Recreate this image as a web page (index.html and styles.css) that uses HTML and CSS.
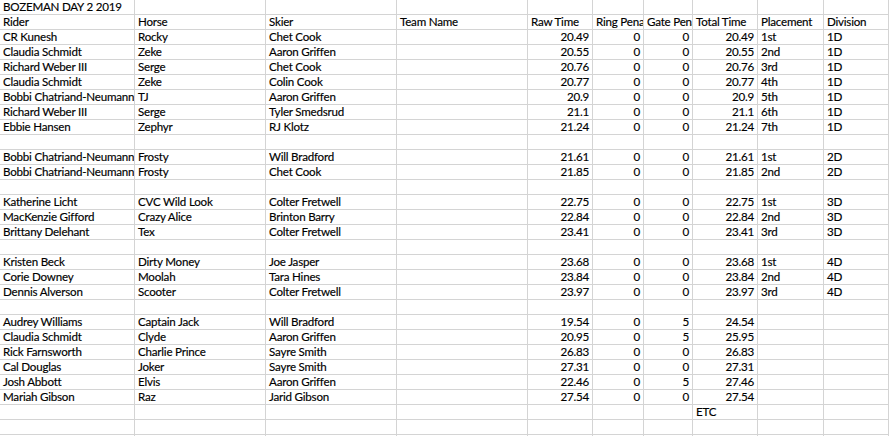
FILE: index.html
```html
<!DOCTYPE html>
<html>
<head>
<meta charset="utf-8">
<link rel="stylesheet" href="styles.css">
</head>
<body>
<div class="sheet">
  <div class="row"><span class="c">BOZEMAN DAY 2 2019</span><span class="c"></span><span class="c"></span><span class="c"></span><span class="c"></span><span class="c"></span><span class="c"></span><span class="c"></span><span class="c"></span><span class="c"></span></div>
  <div class="row"><span class="c">Rider</span><span class="c">Horse</span><span class="c">Skier</span><span class="c">Team Name</span><span class="c">Raw Time</span><span class="c">Ring Penalties</span><span class="c">Gate Penalties</span><span class="c">Total Time</span><span class="c">Placement</span><span class="c">Division</span></div>

  <div class="row"><span class="c">CR Kunesh</span><span class="c">Rocky</span><span class="c">Chet Cook</span><span class="c"></span><span class="c n">20.49</span><span class="c n">0</span><span class="c n">0</span><span class="c n">20.49</span><span class="c">1st</span><span class="c">1D</span></div>
  <div class="row"><span class="c">Claudia Schmidt</span><span class="c">Zeke</span><span class="c">Aaron Griffen</span><span class="c"></span><span class="c n">20.55</span><span class="c n">0</span><span class="c n">0</span><span class="c n">20.55</span><span class="c">2nd</span><span class="c">1D</span></div>
  <div class="row"><span class="c">Richard Weber III</span><span class="c">Serge</span><span class="c">Chet Cook</span><span class="c"></span><span class="c n">20.76</span><span class="c n">0</span><span class="c n">0</span><span class="c n">20.76</span><span class="c">3rd</span><span class="c">1D</span></div>
  <div class="row"><span class="c">Claudia Schmidt</span><span class="c">Zeke</span><span class="c">Colin Cook</span><span class="c"></span><span class="c n">20.77</span><span class="c n">0</span><span class="c n">0</span><span class="c n">20.77</span><span class="c">4th</span><span class="c">1D</span></div>
  <div class="row"><span class="c">Bobbi Chatriand-Neumann</span><span class="c">TJ</span><span class="c">Aaron Griffen</span><span class="c"></span><span class="c n">20.9</span><span class="c n">0</span><span class="c n">0</span><span class="c n">20.9</span><span class="c">5th</span><span class="c">1D</span></div>
  <div class="row"><span class="c">Richard Weber III</span><span class="c">Serge</span><span class="c">Tyler Smedsrud</span><span class="c"></span><span class="c n">21.1</span><span class="c n">0</span><span class="c n">0</span><span class="c n">21.1</span><span class="c">6th</span><span class="c">1D</span></div>
  <div class="row"><span class="c">Ebbie Hansen</span><span class="c">Zephyr</span><span class="c">RJ Klotz</span><span class="c"></span><span class="c n">21.24</span><span class="c n">0</span><span class="c n">0</span><span class="c n">21.24</span><span class="c">7th</span><span class="c">1D</span></div>

  <div class="row"><span class="c"></span><span class="c"></span><span class="c"></span><span class="c"></span><span class="c"></span><span class="c"></span><span class="c"></span><span class="c"></span><span class="c"></span><span class="c"></span></div>

  <div class="row"><span class="c">Bobbi Chatriand-Neumann</span><span class="c">Frosty</span><span class="c">Will Bradford</span><span class="c"></span><span class="c n">21.61</span><span class="c n">0</span><span class="c n">0</span><span class="c n">21.61</span><span class="c">1st</span><span class="c">2D</span></div>
  <div class="row"><span class="c">Bobbi Chatriand-Neumann</span><span class="c">Frosty</span><span class="c">Chet Cook</span><span class="c"></span><span class="c n">21.85</span><span class="c n">0</span><span class="c n">0</span><span class="c n">21.85</span><span class="c">2nd</span><span class="c">2D</span></div>

  <div class="row"><span class="c"></span><span class="c"></span><span class="c"></span><span class="c"></span><span class="c"></span><span class="c"></span><span class="c"></span><span class="c"></span><span class="c"></span><span class="c"></span></div>

  <div class="row"><span class="c">Katherine Licht</span><span class="c">CVC Wild Look</span><span class="c">Colter Fretwell</span><span class="c"></span><span class="c n">22.75</span><span class="c n">0</span><span class="c n">0</span><span class="c n">22.75</span><span class="c">1st</span><span class="c">3D</span></div>
  <div class="row"><span class="c">MacKenzie Gifford</span><span class="c">Crazy Alice</span><span class="c">Brinton Barry</span><span class="c"></span><span class="c n">22.84</span><span class="c n">0</span><span class="c n">0</span><span class="c n">22.84</span><span class="c">2nd</span><span class="c">3D</span></div>
  <div class="row"><span class="c">Brittany Delehant</span><span class="c">Tex</span><span class="c">Colter Fretwell</span><span class="c"></span><span class="c n">23.41</span><span class="c n">0</span><span class="c n">0</span><span class="c n">23.41</span><span class="c">3rd</span><span class="c">3D</span></div>

  <div class="row"><span class="c"></span><span class="c"></span><span class="c"></span><span class="c"></span><span class="c"></span><span class="c"></span><span class="c"></span><span class="c"></span><span class="c"></span><span class="c"></span></div>

  <div class="row"><span class="c">Kristen Beck</span><span class="c">Dirty Money</span><span class="c">Joe Jasper</span><span class="c"></span><span class="c n">23.68</span><span class="c n">0</span><span class="c n">0</span><span class="c n">23.68</span><span class="c">1st</span><span class="c">4D</span></div>
  <div class="row"><span class="c">Corie Downey</span><span class="c">Moolah</span><span class="c">Tara Hines</span><span class="c"></span><span class="c n">23.84</span><span class="c n">0</span><span class="c n">0</span><span class="c n">23.84</span><span class="c">2nd</span><span class="c">4D</span></div>
  <div class="row"><span class="c">Dennis Alverson</span><span class="c">Scooter</span><span class="c">Colter Fretwell</span><span class="c"></span><span class="c n">23.97</span><span class="c n">0</span><span class="c n">0</span><span class="c n">23.97</span><span class="c">3rd</span><span class="c">4D</span></div>

  <div class="row"><span class="c"></span><span class="c"></span><span class="c"></span><span class="c"></span><span class="c"></span><span class="c"></span><span class="c"></span><span class="c"></span><span class="c"></span><span class="c"></span></div>

  <div class="row"><span class="c">Audrey Williams</span><span class="c">Captain Jack</span><span class="c">Will Bradford</span><span class="c"></span><span class="c n">19.54</span><span class="c n">0</span><span class="c n">5</span><span class="c n">24.54</span><span class="c"></span><span class="c"></span></div>
  <div class="row"><span class="c">Claudia Schmidt</span><span class="c">Clyde</span><span class="c">Aaron Griffen</span><span class="c"></span><span class="c n">20.95</span><span class="c n">0</span><span class="c n">5</span><span class="c n">25.95</span><span class="c"></span><span class="c"></span></div>
  <div class="row"><span class="c">Rick Farnsworth</span><span class="c">Charlie Prince</span><span class="c">Sayre Smith</span><span class="c"></span><span class="c n">26.83</span><span class="c n">0</span><span class="c n">0</span><span class="c n">26.83</span><span class="c"></span><span class="c"></span></div>
  <div class="row"><span class="c">Cal Douglas</span><span class="c">Joker</span><span class="c">Sayre Smith</span><span class="c"></span><span class="c n">27.31</span><span class="c n">0</span><span class="c n">0</span><span class="c n">27.31</span><span class="c"></span><span class="c"></span></div>
  <div class="row"><span class="c">Josh Abbott</span><span class="c">Elvis</span><span class="c">Aaron Griffen</span><span class="c"></span><span class="c n">22.46</span><span class="c n">0</span><span class="c n">5</span><span class="c n">27.46</span><span class="c"></span><span class="c"></span></div>
  <div class="row"><span class="c">Mariah Gibson</span><span class="c">Raz</span><span class="c">Jarid Gibson</span><span class="c"></span><span class="c n">27.54</span><span class="c n">0</span><span class="c n">0</span><span class="c n">27.54</span><span class="c"></span><span class="c"></span></div>

  <div class="row"><span class="c"></span><span class="c"></span><span class="c"></span><span class="c"></span><span class="c"></span><span class="c"></span><span class="c"></span><span class="c">ETC</span><span class="c"></span><span class="c"></span></div>
  <div class="row"><span class="c"></span><span class="c"></span><span class="c"></span><span class="c"></span><span class="c"></span><span class="c"></span><span class="c"></span><span class="c"></span><span class="c"></span><span class="c"></span></div>
  <div class="row"><span class="c"></span><span class="c"></span><span class="c"></span><span class="c"></span><span class="c"></span><span class="c"></span><span class="c"></span><span class="c"></span><span class="c"></span><span class="c"></span></div>
</div>
</body>
</html>
```

FILE: styles.css
```css
html, body {
  margin: 0;
  padding: 0;
  background: #ffffff;
  overflow: hidden;
}

.sheet {
  width: 889px;
  font-family: "Lato", "Open Sans", sans-serif;
  font-size: 11.6px;
  letter-spacing: -0.22px;
  color: #000000;
}

.row {
  display: grid;
  grid-template-columns: 135px 131px 131px 131px 65px 51px 49px 65px 66px 65px;
  height: 15px;
}

.c {
  box-sizing: border-box;
  height: 15px;
  border-right: 1px solid #d4d4d4;
  border-bottom: 1px solid #d4d4d4;
  padding: 0 3px 0 3px;
  line-height: 14px;
  white-space: nowrap;
  overflow: hidden;
  -webkit-text-stroke: 0.15px #000000;
}

.n {
  text-align: right;
}
```
